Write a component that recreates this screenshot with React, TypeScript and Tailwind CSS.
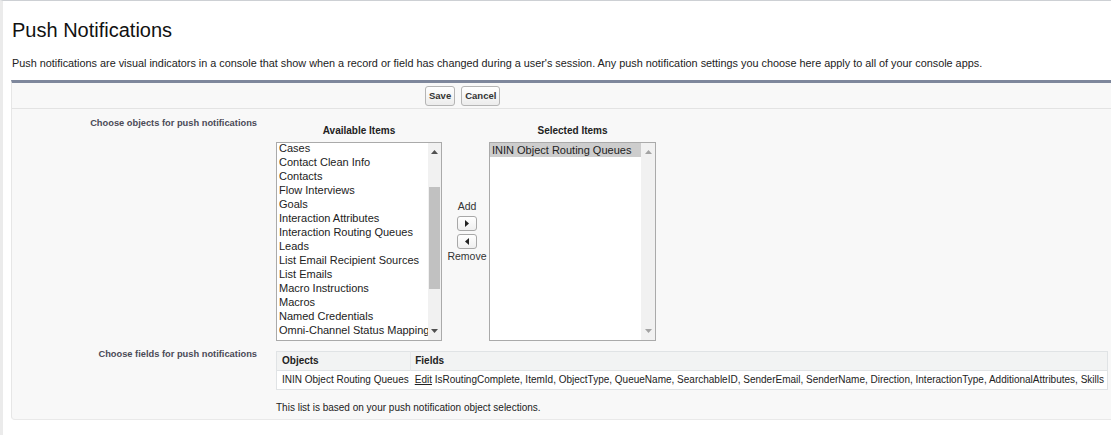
import React from "react";

const available = [
  "Cases",
  "Contact Clean Info",
  "Contacts",
  "Flow Interviews",
  "Goals",
  "Interaction Attributes",
  "Interaction Routing Queues",
  "Leads",
  "List Email Recipient Sources",
  "List Emails",
  "Macro Instructions",
  "Macros",
  "Named Credentials",
  "Omni-Channel Status Mapping",
];

function Tri({ dir, color }: { dir: "up" | "down" | "left" | "right"; color: string }) {
  const pts: Record<string, string> = {
    up: "0,4 3.5,0 7,4",
    down: "0,0 3.5,4 7,0",
    left: "4,0 4,7 0,3.5",
    right: "0,0 0,7 4,3.5",
  };
  const w = dir === "up" || dir === "down" ? 7 : 4;
  const h = dir === "up" || dir === "down" ? 4 : 7;
  return (
    <svg width={w} height={h} viewBox={`0 0 ${w} ${h}`}>
      <polygon points={pts[dir]} fill={color} />
    </svg>
  );
}

function Btn({ children }: { children: React.ReactNode }) {
  return (
    <button className="h-[20px] px-[3px] rounded-[3px] border border-[#b5b5b5] bg-gradient-to-b from-white to-[#ececec] text-[9.5px] font-bold text-[#333] leading-none">
      {children}
    </button>
  );
}

function ArrowBtn({ dir }: { dir: "left" | "right" }) {
  return (
    <div className="w-[20px] h-[15px] rounded-[3px] border border-[#a8a8a8] bg-gradient-to-b from-white to-[#efefef] flex items-center justify-center">
      <Tri dir={dir} color="#222" />
    </div>
  );
}

export default function App() {
  return (
    <div className="min-h-[435px] w-[1111px] overflow-hidden bg-white border-t border-[#cdd0d4] border-l-[3px] border-l-[#ebebeb] font-['Liberation_Sans',Arial,sans-serif] text-[#333]">
      <h1 className="pl-[9px] pt-[17px] text-[20px] leading-[24px] text-[#111] font-normal">Push Notifications</h1>
      <p className="pl-[9px] mt-[14px] text-[10.85px] leading-[14px] text-[#222]">
        Push notifications are visual indicators in a console that show when a record or field has changed during a user's session. Any push notification settings you choose here apply to all of your console apps.
      </p>

      <div className="ml-[8px] mt-[10px] mr-[-20px] bg-[#f8f8f8] border-t-[3px] border-t-[#7e879c] border-l border-l-[#e6e6e6] border-b border-b-[#e9e9e9] rounded-bl-[4px]">
        <div className="h-[26px] flex items-center gap-[6px] pl-[413px] border-b border-[#e3e3e3]">
          <Btn>Save</Btn>
          <Btn>Cancel</Btn>
        </div>

        <div className="flex pt-[8px] pb-[7px]">
          <div className="w-[246px] shrink-0 text-right pr-[1px] text-[9.3px] leading-[12px] font-bold text-[#4a4a56]">
            Choose objects for push notifications
          </div>
          <div className="ml-[18px] mt-[8px] flex">
            <div className="flex flex-col items-center w-[166px]">
              <div className="text-[10px] leading-[12px] font-bold text-[#222]">Available Items</div>
              <div className="mt-[5px] w-[166px] h-[199px] border border-[#aaaaaa] bg-white flex overflow-hidden">
                <div className="flex-1 overflow-hidden">
                  <div className="-mt-[2px] pl-[2px]">
                    {available.map((a) => (
                      <div key={a} className="h-[14px] text-[11px] leading-[14px] whitespace-nowrap text-[#222]">
                        {a}
                      </div>
                    ))}
                  </div>
                </div>
                <div className="w-[13px] bg-[#f1f1f1] flex flex-col items-center">
                  <div className="h-[16px] flex items-center justify-center pt-[2px]">
                    <Tri dir="up" color="#505050" />
                  </div>
                  <div className="mt-[28px] w-[11px] h-[102px] bg-[#c1c1c1]" />
                  <div className="flex-1" />
                  <div className="h-[16px] flex items-center justify-center pb-[2px]">
                    <Tri dir="down" color="#505050" />
                  </div>
                </div>
              </div>
            </div>

            <div className="w-[47px] pl-[3px] flex flex-col items-center pt-[75px] text-[10.5px] leading-[12px] text-[#333]">
              <div>Add</div>
              <div className="mt-[4px]"><ArrowBtn dir="right" /></div>
              <div className="mt-[3px]"><ArrowBtn dir="left" /></div>
              <div className="mt-[1px]">Remove</div>
            </div>

            <div className="flex flex-col items-center w-[167px]">
              <div className="text-[10px] leading-[12px] font-bold text-[#222]">Selected Items</div>
              <div className="mt-[5px] w-[167px] h-[199px] border border-[#aaaaaa] bg-white flex overflow-hidden">
                <div className="flex-1 overflow-hidden">
                  <div className="h-[14px] pl-[2px] bg-[#cdcdcd] text-[11px] leading-[14px] whitespace-nowrap text-[#222]">
                    ININ Object Routing Queues
                  </div>
                </div>
                <div className="w-[14px] bg-[#f1f1f1] flex flex-col items-center justify-between">
                  <div className="h-[16px] flex items-center justify-center pt-[2px]">
                    <Tri dir="up" color="#a3a3a3" />
                  </div>
                  <div className="h-[16px] flex items-center justify-center pb-[2px]">
                    <Tri dir="down" color="#a3a3a3" />
                  </div>
                </div>
              </div>
            </div>
          </div>
        </div>

        <div className="flex pb-[5px]">
          <div className="w-[246px] shrink-0 text-right pr-[1px] text-[9.3px] leading-[12px] font-bold text-[#4a4a56]">
            Choose fields for push notifications
          </div>
          <div className="ml-[18px] mt-[3px]">
            <table className="border border-[#e0e3e5] border-collapse text-[10px] leading-[12px] whitespace-nowrap">
              <thead>
                <tr className="bg-[#f2f3f3] h-[19px]">
                  <th className="text-left font-bold pl-[5px] pr-[2px] text-[#222]">Objects</th>
                  <th className="text-left font-bold pl-[4px] pr-[3px] text-[#222] border-l border-[#e6e8ea]">Fields</th>
                </tr>
              </thead>
              <tbody>
                <tr className="bg-white h-[19px] border-t border-[#e0e3e5]">
                  <td className="pl-[5px] pr-[2px] text-[#222]">ININ Object Routing Queues</td>
                  <td className="pl-[4px] pr-[3px] text-[#222]">
                    <span className="underline">Edit</span> IsRoutingComplete, ItemId, ObjectType, QueueName, SearchableID, SenderEmail, SenderName, Direction, InteractionType, AdditionalAttributes, Skills
                  </td>
                </tr>
              </tbody>
            </table>
            <div className="mt-[12px] text-[10px] leading-[12px] text-[#222]">
              This list is based on your push notification object selections.
            </div>
          </div>
        </div>
      </div>
    </div>
  );
}
